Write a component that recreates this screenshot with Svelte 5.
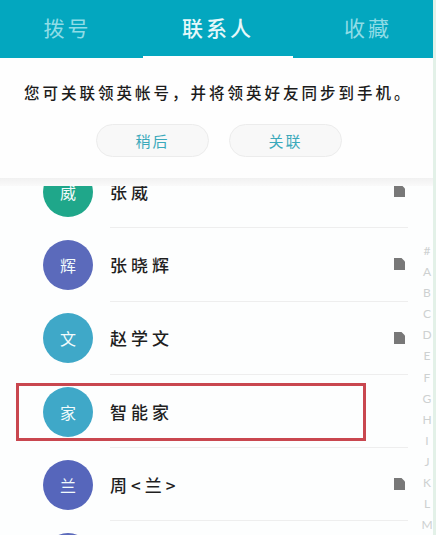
<script>
  const tabs = [
    { label: '拨号', active: false },
    { label: '联系人', active: true },
    { label: '收藏', active: false }
  ];
  const contacts = [
    { name: '张威', mark: '威', color: '#1fa78a', doc: true },
    { name: '张晓辉', mark: '辉', color: '#5b6abb', doc: true },
    { name: '赵学文', mark: '文', color: '#3fa8c8', doc: true },
    { name: '智能家', mark: '家', color: '#3fa8c8', doc: false },
    { name: '周<兰>', mark: '兰', color: '#5666bb', doc: true },
    { name: '', mark: '', color: '#5b6abb', doc: false }
  ];
  const letters = '#ABCDEFGHIJKLM'.split('');
</script>

<div class="screen">
  <header class="tabs">
    {#each tabs as tab}
      <div class="tab" class:active={tab.active}>{tab.label}</div>
    {/each}
  </header>

  <section class="banner">
    <p>您可关联领英帐号，并将领英好友同步到手机。</p>
    <div class="actions">
      <button>稍后</button>
      <button>关联</button>
    </div>
    <div class="fade"></div>
  </section>

  <ul class="list">
    {#each contacts as c}
      <li class="row">
        <span class="avatar" style="background:{c.color}">{c.mark}</span>
        <div class="body">
          <span class="name">{c.name}</span>
          {#if c.doc}
            <svg class="doc" viewBox="0 0 11 12" width="11" height="12" aria-hidden="true">
              <path d="M0 0H7.5L11 3.5V12H0Z" fill="#787878" />
            </svg>
          {/if}
        </div>
      </li>
    {/each}
  </ul>

  <nav class="index">
    {#each letters as l}
      <span>{l}</span>
    {/each}
  </nav>

  <div class="highlight"></div>
</div>

<style>
  :global(body) {
    margin: 0;
    background: #fdfefe;
  }
  .screen {
    position: relative;
    width: 436px;
    height: 535px;
    overflow: hidden;
    box-sizing: border-box;
    border-right: 3px solid #e3f1e8;
    background: #fdfefe;
    font-family: "Noto Sans CJK SC", "Noto Sans", sans-serif;
  }
  .tabs {
    position: relative;
    z-index: 2;
    display: grid;
    grid-template-columns: 143px 150px 1fr;
    height: 58px;
    background: #03a7bf;
  }
  .tab {
    display: flex;
    align-items: center;
    justify-content: center;
    height: 58px;
    box-sizing: border-box;
    padding-bottom: 4px;
    font-size: 21px;
    letter-spacing: 3px;
    color: #8fdce6;
  }
  .tab:first-child {
    padding-right: 8px;
  }
  .tab:last-child {
    padding-left: 10px;
  }
  .tab.active {
    color: #e6f8fa;
    font-weight: 500;
    border-bottom: 2px solid #ffffff;
    padding-bottom: 2px;
  }
  .banner {
    position: relative;
    z-index: 1;
    height: 128px;
    box-sizing: border-box;
    padding-top: 23px;
    background: #fefefe;
  }
  .banner p {
    margin: 0;
    padding-left: 24px;
    font-size: 15.5px;
    font-weight: 500;
    line-height: 22px;
    letter-spacing: 3px;
    white-space: nowrap;
    color: #1c1c1c;
  }
  .actions {
    display: flex;
    gap: 20px;
    margin-top: 21px;
    padding-left: 96px;
  }
  .actions button {
    width: 113px;
    height: 33px;
    padding: 0;
    border: 1px solid #ececec;
    border-radius: 17px;
    background: #f8f8f8;
    font: inherit;
    font-size: 15px;
    letter-spacing: 2px;
    color: #3ba9bb;
  }
  .fade {
    position: absolute;
    left: 0;
    right: 0;
    bottom: 0;
    height: 8px;
    background: linear-gradient(#f1f1f1, #fafafa);
  }
  .list {
    margin: -31px 0 0;
    padding: 0;
    list-style: none;
  }
  .row {
    display: flex;
    align-items: center;
    gap: 17px;
    height: 73.3px;
    padding-left: 43px;
  }
  .avatar {
    flex: none;
    display: flex;
    align-items: center;
    justify-content: center;
    width: 50px;
    height: 50px;
    border-radius: 50%;
    font-size: 16px;
    color: #f2fbfc;
  }
  .body {
    display: flex;
    align-items: center;
    justify-content: space-between;
    align-self: stretch;
    width: 298px;
    box-sizing: border-box;
    padding-right: 3px;
    border-bottom: 1px solid #eeeeee;
  }
  .name {
    font-size: 17px;
    font-weight: 500;
    letter-spacing: 4px;
    color: #1f1f1f;
  }
  .doc {
    flex: none;
  }
  .index {
    position: absolute;
    z-index: 1;
    top: 240px;
    right: 0;
    display: flex;
    flex-direction: column;
    width: 12px;
    align-items: center;
    font-family: "Lato", "Liberation Sans", sans-serif;
    font-size: 12px;
    line-height: 21.1px;
    color: #cdd1d1;
  }
  .highlight {
    position: absolute;
    z-index: 3;
    left: 16px;
    top: 383px;
    width: 350px;
    height: 58px;
    box-sizing: border-box;
    border: 3px solid #c9474f;
    pointer-events: none;
  }
</style>
